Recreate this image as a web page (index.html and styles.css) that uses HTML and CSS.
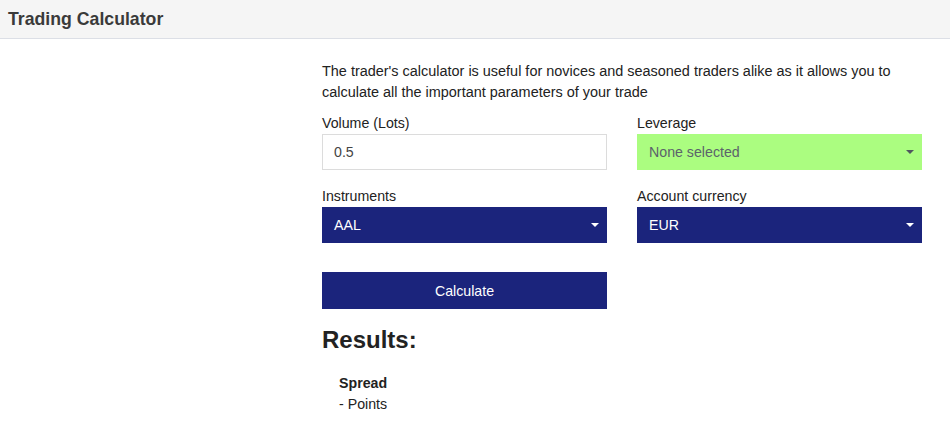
FILE: index.html
```html
<!DOCTYPE html>
<html lang="en">
<head>
<meta charset="utf-8">
<title>Trading Calculator</title>
<link rel="stylesheet" href="styles.css">
</head>
<body>
<header class="topbar">
  <h1 class="title">Trading Calculator</h1>
</header>
<main class="page">
  <section class="calc">
    <p class="intro">The trader's calculator is useful for novices and seasoned traders alike as it allows you to calculate all the important parameters of your trade</p>
    <div class="grid">
      <div class="field">
        <label class="label">Volume (Lots)</label>
        <div class="input">0.5</div>
      </div>
      <div class="field">
        <label class="label">Leverage</label>
        <div class="select select-green"><span>None selected</span><span class="caret caret-dark"></span></div>
      </div>
      <div class="field">
        <label class="label">Instruments</label>
        <div class="select select-navy"><span>AAL</span><span class="caret caret-light"></span></div>
      </div>
      <div class="field">
        <label class="label">Account currency</label>
        <div class="select select-navy"><span>EUR</span><span class="caret caret-light"></span></div>
      </div>
    </div>
    <div class="grid actions">
      <button class="btn">Calculate</button>
    </div>
    <h2 class="results-title">Results:</h2>
    <div class="result">
      <div class="result-name">Spread</div>
      <div class="result-value">- Points</div>
    </div>
  </section>
</main>
</body>
</html>
```
FILE: styles.css
```css
* { box-sizing: border-box; }
html, body { margin: 0; padding: 0; background: #fff; }
body {
  font-family: "Liberation Sans", Arial, Helvetica, sans-serif;
  color: #222;
  font-size: 14px;
}
.topbar {
  height: 39px;
  background: #f5f5f5;
  border-bottom: 1px solid #dcdfe6;
  display: flex;
  align-items: center;
  padding-left: 8px;
}
.title {
  margin: 0;
  font-size: 17.7px;
  font-weight: bold;
  color: #3a3a3a;
}
.page {
  padding-left: 322px;
  padding-top: 22px;
}
.calc { width: 600px; }
.intro {
  margin: 0 0 10px 0;
  line-height: 21px;
  font-size: 14.45px;
  color: #222;
}
.grid {
  display: grid;
  grid-template-columns: 285px 285px;
  column-gap: 30px;
  row-gap: 16px;
}
.field { display: flex; flex-direction: column; }
.label {
  font-size: 14.2px;
  line-height: 20px;
  margin-bottom: 1px;
  color: #222;
}
.input {
  height: 36px;
  border: 1px solid #dcdcdc;
  padding: 0 11px;
  display: flex;
  align-items: center;
  font-size: 14.2px;
  color: #444;
}
.select {
  height: 36px;
  display: flex;
  align-items: center;
  justify-content: space-between;
  padding: 0 8px 0 12px;
  font-size: 14.2px;
}
.select-green { background: #abfd80; color: #5b636b; }
.select-navy { background: #1b247c; color: #fff; }
.caret {
  width: 0; height: 0;
  border-left: 4px solid transparent;
  border-right: 4px solid transparent;
  border-top: 4px solid;
}
.caret-dark { border-top-color: #50565e; }
.caret-light { border-top-color: #fff; }
.actions { margin-top: 29px; }
.btn {
  height: 37px;
  background: #1b247c;
  color: #fff;
  border: none;
  font-family: "Liberation Sans", Arial, Helvetica, sans-serif;
  font-size: 14.2px;
  cursor: pointer;
}
.results-title {
  margin: 17px 0 0 0;
  font-size: 24px;
  line-height: 28px;
  font-weight: bold;
  color: #222;
}
.result {
  padding-left: 17px;
  margin-top: 19px;
  line-height: 21px;
}
.result-name { font-weight: bold; font-size: 14.2px; }
.result-value { font-size: 14.2px; }
```
